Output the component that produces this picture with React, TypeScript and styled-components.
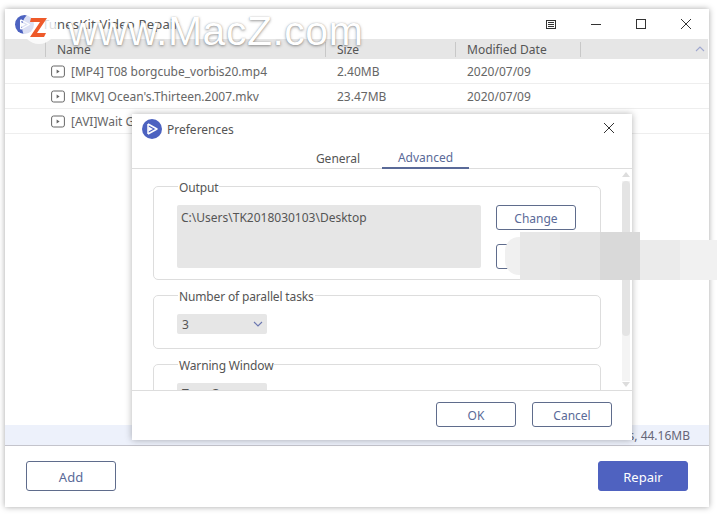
import React from "react";
import styled, { createGlobalStyle } from "styled-components";

const Global = createGlobalStyle`
  html, body { margin: 0; padding: 0; background: #fff; }
  body { font-family: "Noto Sans", "Open Sans", sans-serif; font-size: 12px; color: #555; }
  * { box-sizing: border-box; }
`;

const Page = styled.div`
  position: relative;
  width: 717px;
  height: 519px;
  padding: 9px 8px 12px 5px;
  overflow: hidden;
`;

const Win = styled.div`
  position: relative;
  height: 498px;
  display: flex;
  flex-direction: column;
  background: #fff;
  box-shadow: 0 0 6px rgba(0, 0, 0, 0.35);
`;

const TitleBar = styled.div`
  height: 30px;
  display: flex;
  align-items: center;
  padding-left: 10px;
  flex: none;
`;

const TitleText = styled.span`
  margin-left: 8px;
  font-size: 13px;
  letter-spacing: 0.2px;
  color: #555;
`;

const WinButtons = styled.div`
  margin-left: auto;
  display: flex;
  align-items: center;
  padding-right: 18px;
  gap: 35px;
  color: #333;
`;

const HeadRow = styled.div`
  height: 20px;
  flex: none;
  background: #e6e6e6;
  display: grid;
  grid-template-columns: 40px 280px 130px 125px 1fr;
  align-items: center;
  margin-right: 1px;
`;

const HeadCell = styled.div<{ $bare?: boolean }>`
  height: 15px;
  display: flex;
  align-items: center;
  padding-left: 11px;
  padding-right: 3px;
  border-left: ${(p) => (p.$bare ? "none" : "1px solid #c8c8c8")};
  color: #555;
  font-size: 12px;
  justify-content: space-between;
`;

const Row = styled.div`
  height: 25px;
  flex: none;
  display: grid;
  grid-template-columns: 46px 280px 130px 1fr;
  align-items: center;
  border-bottom: 1px solid #eeeeee;
  color: #666;
`;

const NameCell = styled.div`
  grid-column: 2;
  display: flex;
  align-items: center;
  gap: 6px;
  white-space: nowrap;
`;

const ValueCell = styled.div`
  padding-left: 6px;
`;

const Spacer = styled.div`
  flex: 1;
`;

const StatusBar = styled.div`
  height: 21px;
  flex: none;
  background: #edf1fb;
  border-bottom: 1px solid #c4c4cc;
  display: flex;
  align-items: center;
  justify-content: flex-end;
  padding-right: 19px;
  color: #667;
`;

const Footer = styled.div`
  height: 61px;
  flex: none;
  display: flex;
  justify-content: space-between;
  align-items: flex-start;
  padding: 15px 21px;
`;

const Btn = styled.button<{ $w?: number; $h?: number }>`
  width: ${(p) => p.$w ?? 80}px;
  height: ${(p) => p.$h ?? 25}px;
  flex: none;
  border: 1px solid #5f6c8c;
  border-radius: 3px;
  background: #fff;
  color: #5a6a98;
  font: inherit;
  font-size: ${(p) => ((p.$h ?? 25) > 25 ? 13 : 12)}px;
  padding: 1px 0 0;
`;

const Primary = styled(Btn)`
  background: #4f62c0;
  border-color: #4f62c0;
  color: #fff;
`;

const Dialog = styled.div`
  position: absolute;
  left: 127px;
  top: 105px;
  width: 500px;
  height: 326px;
  background: #fff;
  display: flex;
  flex-direction: column;
  box-shadow: 0 0 7px rgba(0, 0, 0, 0.3);
`;

const DialogHead = styled.div`
  height: 30px;
  flex: none;
  display: flex;
  align-items: center;
  padding: 0 18px 0 10px;
  color: #555;
  gap: 5px;
`;

const CloseSlot = styled.span`
  margin-left: auto;
  margin-bottom: 2px;
  display: flex;
`;

const Tabs = styled.div`
  height: 25px;
  flex: none;
  display: flex;
  padding-left: 162px;
  border-bottom: 1px solid #ddd;
`;

const Tab = styled.div<{ $on?: boolean }>`
  width: ${(p) => (p.$on ? 87 : 88)}px;
  height: 25px;
  display: flex;
  align-items: center;
  justify-content: center;
  padding-top: 3px;
  color: ${(p) => (p.$on ? "#5a6a98" : "#555")};
  border-bottom: ${(p) => (p.$on ? "2px solid #5a6a98" : "none")};
`;

const Scroll = styled.div`
  position: relative;
  height: 221px;
  flex: none;
  overflow: hidden;
  padding: 6px 31px 0 21px;
  display: flex;
  flex-direction: column;
  gap: 4px;
`;

const Group = styled.fieldset<{ $h: number }>`
  margin: 0;
  padding: 0 23px;
  height: ${(p) => p.$h}px;
  flex: none;
  border: 1px solid #ddd;
  border-radius: 5px;
  min-width: 0;
`;

const Legend = styled.legend`
  margin-left: 1px;
  padding: 4px 1px 0;
  font-size: 12px;
  line-height: 18px;
  letter-spacing: -0.15px;
  color: #555;
`;

const OutputRow = styled.div`
  display: flex;
  gap: 15px;
  margin-top: 8px;
`;

const PathBox = styled.div`
  width: 304px;
  height: 63px;
  background: #e6e6e6;
  border-radius: 2px;
  padding: 2px 4px;
  color: #555;
  line-height: 22px;
`;

const BtnCol = styled.div`
  display: flex;
  flex-direction: column;
  gap: 14px;
`;

const Select = styled.div`
  width: 90px;
  height: 20px;
  margin-top: 8px;
  background: #e6e6e6;
  border-radius: 2px;
  display: flex;
  align-items: center;
  justify-content: space-between;
  padding: 0 4px 0 5px;
  color: #555;
`;

const ScrollTrack = styled.div`
  position: absolute;
  right: 2px;
  top: 12px;
  bottom: 9px;
  width: 8px;
  background: #f4f4f4;
`;

const ScrollThumb = styled.div`
  height: 155px;
  border-radius: 4px;
  background: #e4e4e4;
`;

const ScrollArrow = styled.div<{ $down?: boolean }>`
  position: absolute;
  right: 2px;
  ${(p) => (p.$down ? "bottom: 3px;" : "top: 3px;")}
  width: 0;
  height: 0;
  border-left: 4px solid transparent;
  border-right: 4px solid transparent;
  ${(p) => (p.$down ? "border-top" : "border-bottom")}: 5px solid #ddd;
`;

const DialogFoot = styled.div`
  flex: 1;
  border-top: 1px solid #ddd;
  display: flex;
  justify-content: flex-end;
  gap: 16px;
  padding: 11px 20px 0 0;
`;

const Watermark = styled.div`
  position: absolute;
  left: 68px;
  top: 7px;
  font-family: "Liberation Sans", sans-serif;
  font-size: 41px;
  line-height: 48px;
  letter-spacing: 0.5px;
  color: #fff;
  text-shadow: 0 1px 3px rgba(70, 70, 70, 0.55), 0 0 1px rgba(70, 70, 70, 0.35);
  white-space: nowrap;
`;

const LogoDisc = styled.div`
  position: absolute;
  left: 22px;
  top: 10px;
  width: 34px;
  height: 34px;
  border-radius: 50%;
  background: rgba(255, 255, 255, 0.8);
  display: flex;
  align-items: center;
  justify-content: center;
`;

const Smudge = styled.div`
  position: absolute;
  left: 505px;
  top: 232px;
  width: 212px;
  height: 48px;
  display: flex;
  align-items: flex-end;
`;

const SmudgeBit = styled.div<{ $w: number; $h: number; $c: string; $round?: boolean }>`
  width: ${(p) => p.$w}px;
  height: ${(p) => p.$h}px;
  background: ${(p) => p.$c};
  flex: none;
  border-radius: ${(p) => (p.$round ? "14px 0 0 14px" : "0")};
  margin-bottom: ${(p) => (p.$round ? "5px" : "0")};
`;

const PlayFile = () => (
  <svg width="14" height="13" viewBox="0 0 14 13" fill="none">
    <rect x="0.6" y="1" width="12.8" height="11" rx="2" stroke="#666" strokeWidth="1" />
    <path d="M5.6 4.4 L8.6 6.5 L5.6 8.6 Z" fill="#666" />
  </svg>
);

const AppLogo = ({ size = 20 }: { size?: number }) => (
  <svg width={size} height={size} viewBox="0 0 20 20">
    <circle cx="10" cy="10" r="10" fill="#4c62c0" />
    <path d="M6 5 V15 M6 5 L15 10 L6 15" stroke="#fff" strokeWidth="1.5" fill="none" strokeLinejoin="round" />
    <path d="M6.4 7.5 L11 10 L6.4 12.5 Z" fill="#fff" />
  </svg>
);

const CloseX = ({ s = 10 }: { s?: number }) => (
  <svg width={s} height={s} viewBox="0 0 10 10">
    <path d="M0 0 L10 10 M10 0 L0 10" stroke="#333" strokeWidth="1" />
  </svg>
);

const Chevron = ({ color = "#6a76b0", up = false }: { color?: string; up?: boolean }) => (
  <svg width="10" height="6" viewBox="0 0 10 6">
    <path d={up ? "M1 5 L5 1 L9 5" : "M1 1 L5 5 L9 1"} stroke={color} strokeWidth="1.1" fill="none" />
  </svg>
);

const rows = [
  { name: "[MP4] T08 borgcube_vorbis20.mp4", size: "2.40MB", date: "2020/07/09" },
  { name: "[MKV] Ocean's.Thirteen.2007.mkv", size: "23.47MB", date: "2020/07/09" },
  { name: "[AVI]Wait Grace.avi", size: "", date: "" },
];

export default function App() {
  return (
    <>
      <Global />
      <Page>
        <Win>
          <TitleBar>
            <AppLogo size={19} />
            <TitleText>TunesKit Video Repair</TitleText>
            <WinButtons>
              <svg width="10" height="9" viewBox="0 0 10 9" fill="none" stroke="#333">
                <rect x="0.5" y="0.5" width="9" height="8" />
                <path d="M2 2.5 H8 M2 4.5 H8 M2 6.5 H8" />
              </svg>
              <svg width="10" height="10" viewBox="0 0 10 10" stroke="#333">
                <path d="M0 5.5 H10" />
              </svg>
              <svg width="10" height="10" viewBox="0 0 10 10" fill="none" stroke="#333">
                <rect x="0.5" y="0.5" width="9" height="9" />
              </svg>
              <CloseX />
            </WinButtons>
          </TitleBar>
          <HeadRow>
            <HeadCell $bare />
            <HeadCell>Name</HeadCell>
            <HeadCell>Size</HeadCell>
            <HeadCell>Modified Date</HeadCell>
            <HeadCell>
              <Spacer />
              <Chevron up color="#a0a8d0" />
            </HeadCell>
          </HeadRow>
          {rows.map((r) => (
            <Row key={r.name}>
              <NameCell>
                <PlayFile />
                {r.name}
              </NameCell>
              <ValueCell>{r.size}</ValueCell>
              <ValueCell>{r.date}</ValueCell>
            </Row>
          ))}
          <Spacer />
          <StatusBar>3 files, 44.16MB</StatusBar>
          <Footer>
            <Btn $w={90} $h={30}>Add</Btn>
            <Primary $w={90} $h={30}>Repair</Primary>
          </Footer>
          <Dialog>
            <DialogHead>
              <AppLogo />
              Preferences
              <CloseSlot>
                <CloseX />
              </CloseSlot>
            </DialogHead>
            <Tabs>
              <Tab>General</Tab>
              <Tab $on>Advanced</Tab>
            </Tabs>
            <Scroll>
              <Group $h={105}>
                <Legend>Output</Legend>
                <OutputRow>
                  <PathBox>C:\Users\TK2018030103\Desktop</PathBox>
                  <BtnCol>
                    <Btn>Change</Btn>
                    <Btn>Open</Btn>
                  </BtnCol>
                </OutputRow>
              </Group>
              <Group $h={65}>
                <Legend>Number of parallel tasks</Legend>
                <Select>
                  3
                  <Chevron />
                </Select>
              </Group>
              <Group $h={80}>
                <Legend>Warning Window</Legend>
                <Select>
                  Turn On
                  <Chevron />
                </Select>
              </Group>
              <ScrollArrow />
              <ScrollTrack>
                <ScrollThumb />
              </ScrollTrack>
              <ScrollArrow $down />
            </Scroll>
            <DialogFoot>
              <Btn>OK</Btn>
              <Btn>Cancel</Btn>
            </DialogFoot>
          </Dialog>
        </Win>
        <LogoDisc>
          <svg width="20" height="24" viewBox="0 0 20 24">
            <path d="M2 3 H18 L8 18 H17 L15 22 H1 L11 7 H1 Z" fill="#ee5a2a" />
          </svg>
        </LogoDisc>
        <Watermark aria-hidden>www.MacZ.com</Watermark>
        <Smudge>
          <SmudgeBit $w={15} $h={38} $c="#f0f0f0" $round />
          <SmudgeBit $w={40} $h={48} $c="#e7e7e7" />
          <SmudgeBit $w={40} $h={48} $c="#e3e3e3" />
          <SmudgeBit $w={40} $h={48} $c="#d9d9d9" />
          <SmudgeBit $w={40} $h={40} $c="#ebebeb" />
          <SmudgeBit $w={37} $h={40} $c="#f1f1f1" />
        </Smudge>
      </Page>
    </>
  );
}
